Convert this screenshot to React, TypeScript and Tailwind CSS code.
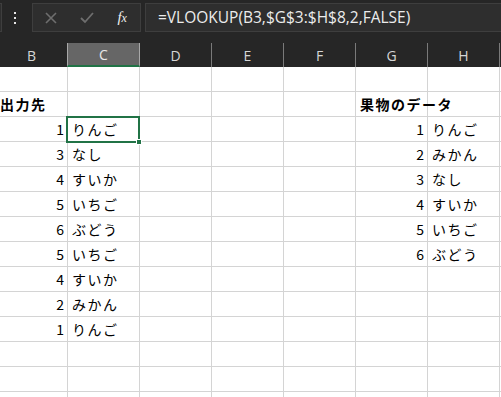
import React from "react";

const colsTop = ["B", "C", "D", "E", "F", "G", "H", ""];

type Cell = { t?: string; num?: boolean; bold?: boolean };

const left: [string, string][] = [
  ["1", "りんご"],
  ["3", "なし"],
  ["4", "すいか"],
  ["5", "いちご"],
  ["6", "ぶどう"],
  ["5", "いちご"],
  ["4", "すいか"],
  ["2", "みかん"],
  ["1", "りんご"],
];
const right: [string, string][] = [
  ["1", "りんご"],
  ["2", "みかん"],
  ["3", "なし"],
  ["4", "すいか"],
  ["5", "いちご"],
  ["6", "ぶどう"],
];

function buildRows(): Cell[][] {
  const rows: Cell[][] = [];
  for (let r = 1; r <= 14; r++) {
    const row: Cell[] = Array.from({ length: 8 }, () => ({}));
    if (r === 2) {
      row[0] = { t: "出力先", bold: true };
      row[5] = { t: "果物のデータ", bold: true };
    }
    const li = r - 3;
    if (li >= 0 && li < left.length) {
      row[0] = { t: left[li][0], num: true };
      row[1] = { t: left[li][1] };
    }
    if (li >= 0 && li < right.length) {
      row[5] = { t: right[li][0], num: true };
      row[6] = { t: right[li][1] };
    }
    rows.push(row);
  }
  return rows;
}

export default function App() {
  const rows = buildRows();
  return (
    <div className="w-[501px] h-[397px] overflow-hidden bg-white relative" style={{ fontFamily: '"Noto Sans CJK JP", "Noto Sans", sans-serif' }}>
      {/* top formula bar */}
      <div className="h-[43px] bg-[#262626] flex items-start pt-[3px] gap-[4px]">
        <div className="flex items-start">
          <div className="-ml-[6px] w-[8px] h-[29px] bg-[#2e2e2e] border border-[#3e3e3e]" />
          <div className="w-[26px] h-[29px] flex items-center justify-center text-[#e6e6e6]">
            <svg width="4" height="14" viewBox="0 0 4 14">
              <rect x="1" y="1" width="2" height="2" fill="#e6e6e6" />
              <rect x="1" y="6" width="2" height="2" fill="#e6e6e6" />
              <rect x="1" y="11" width="2" height="2" fill="#e6e6e6" />
            </svg>
          </div>
        </div>
        <div className="w-[109px] h-[29px] bg-[#2e2e2e] border border-[#3e3e3e] flex items-center">
          <div className="w-[36px] flex justify-center">
            <svg width="12" height="12" viewBox="0 0 12 12">
              <path d="M1 1 L11 11 M11 1 L1 11" stroke="#6e6e6e" strokeWidth="1.6" />
            </svg>
          </div>
          <div className="w-[36px] flex justify-center">
            <svg width="14" height="12" viewBox="0 0 14 12">
              <path d="M1 6 L5 10 L13 1" stroke="#6e6e6e" strokeWidth="1.8" fill="none" />
            </svg>
          </div>
          <div className="w-[36px] flex justify-center">
            <span className="text-[#f0f0f0] italic text-[15px] leading-none" style={{ fontFamily: '"Liberation Serif", serif' }}>
              f<span className="text-[12px]">x</span>
            </span>
          </div>
        </div>
        <div className="flex-1 h-[29px] bg-[#2e2e2e] border border-[#3e3e3e] border-r-0 -mr-[4px] flex items-center pl-[12px]">
          <span className="text-[#ececec] text-[15.5px] whitespace-nowrap" style={{ fontFamily: '"Open Sans", "Noto Sans", sans-serif' }}>
            =VLOOKUP(B3,$G$3:$H$8,2,FALSE)
          </span>
        </div>
      </div>

      {/* column headers */}
      <div className="h-[24px] bg-[#262626] flex -ml-[4px]">
        {colsTop.map((c, i) => (
          <div
            key={i}
            className={
              i === 1
                ? "shrink-0 h-[24px] bg-[#666666] border-x border-[#a8a8a8] border-b-2 border-b-[#217346] -ml-[1px] w-[73px] flex items-center justify-center text-[#e8e8e8] text-[14px]"
                : "w-[72px] shrink-0 h-[24px] border-r border-[#7a7a7a] flex items-center justify-center text-[#d6d6d6] text-[14px]"
            }
            style={{ fontFamily: '"Open Sans", "Noto Sans", sans-serif' }}
          >
            {c}
          </div>
        ))}
      </div>

      {/* grid */}
      <div className="-ml-[4px] relative">
        {rows.map((row, ri) => (
          <div key={ri} className="flex h-[25px]">
            {row.map((cell, ci) => (
              <div
                key={ci}
                className={
                  "w-[72px] shrink-0 h-[25px] border-r border-b border-[#d4d4d4] flex items-center text-[14px] text-black whitespace-nowrap pt-[1px] " +
                  (cell.num ? "justify-end pr-[3px]" : "pl-[4px] tracking-[1.5px]") +
                  (cell.bold ? " font-bold tracking-[0px] overflow-visible" : "")
                }
              >
                {cell.t ? <span className={cell.bold ? "relative z-10" : ""}>{cell.t}</span> : null}
              </div>
            ))}
          </div>
        ))}
        {/* selection box on C3 */}
        <div className="absolute left-[70px] top-[49px] w-[74px] h-[27px] border-2 border-[#217346] pointer-events-none">
          <div className="absolute -right-[4px] -bottom-[4px] w-[6px] h-[6px] bg-[#217346] border border-white" />
        </div>
      </div>
    </div>
  );
}
